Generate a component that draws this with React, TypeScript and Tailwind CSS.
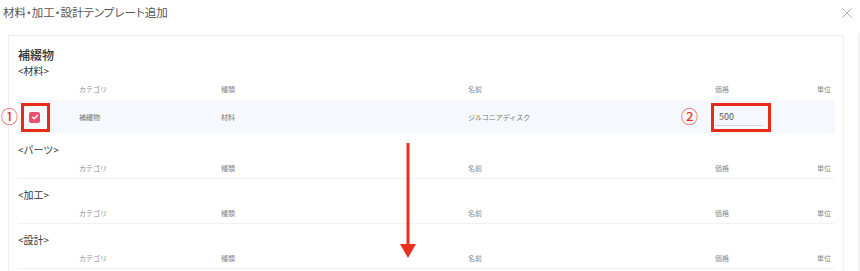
import { X } from 'lucide-react';

const cols = 'grid grid-cols-[61px_142px_247px_247px_90px_1fr] items-center';
const font = { fontFamily: '"Noto Sans CJK JP", "Noto Sans", sans-serif' };

function HeaderRow({ divider = true }: { divider?: boolean }) {
    return (
        <div className={`${cols} h-[21px] text-[7px] text-[#8a8a8a] ${divider ? 'border-b border-[#f0f1f3]' : ''}`}>
            <div />
            <div>カテゴリ</div>
            <div>種類</div>
            <div>名前</div>
            <div>価格</div>
            <div className="text-right pr-[4px]">単位</div>
        </div>
    );
}

function Section({ title }: { title: string }) {
    return (
        <div className="pt-[8px]">
            <div className="h-[16px] leading-[16px] text-[10px] text-[#333]">{title}</div>
            <HeaderRow />
        </div>
    );
}

export default function App() {
    return (
        <div className="relative w-[860px] h-[271px] overflow-hidden bg-white" style={font}>
            {/* Modal header */}
            <div className="flex items-start justify-between h-[35px] pl-[3px] pr-[4px] pt-[4px]">
                <h1 className="text-[11.5px] leading-[16px] text-[#555] [font-feature-settings:'palt']">材料・加工・設計テンプレート追加</h1>
                <X size={18} strokeWidth={1} className="text-[#9a9a9a] mt-[0px]" />
            </div>

            <div className="flex pl-[8px]">
                {/* Card */}
                <div className="w-[836px] border border-b-0 border-[#efefef] pl-[9px] pr-[8px] pt-[11px]">
                    <h2 className="h-[16px] leading-[16px] text-[12px] font-medium text-[#333]">補綴物</h2>

                    {/* 材料 */}
                    <div>
                        <div className="h-[16px] leading-[16px] text-[10px] text-[#333]">&lt;材料&gt;</div>
                        <HeaderRow divider={false} />
                        <div className={`${cols} relative h-[34px] bg-[#f5f8fc] text-[7px] text-[#777]`}>
                            <div className="pl-[11px] flex items-center">
                                <span className="w-[11px] h-[11px] rounded-[2px] bg-[#e8506d] flex items-center justify-center">
                                    <svg width="8" height="8" viewBox="0 0 8 8" fill="none">
                                        <path d="M1.5 4.2 L3.3 5.8 L6.6 2.3" stroke="white" strokeWidth="1.3" strokeLinecap="round" strokeLinejoin="round" />
                                    </svg>
                                </span>
                            </div>
                            <div>補綴物</div>
                            <div>材料</div>
                            <div>ジルコニアディスク</div>
                            <div>
                                <div className="w-[48px] h-[18px] border-b border-[#d4d7dc] pl-[4px] text-[9px] leading-[18px] text-[#555]">500</div>
                            </div>
                            <div />

                            {/* Annotations */}
                            <div className="absolute left-[3px] top-[3px] w-[29px] h-[29px] border-[3px] border-[#ea2a19]" />
                            <div className="absolute left-[-17px] top-[7px] text-[17px] leading-[18px] text-[#ea2a19]">①</div>
                            <div className="absolute left-[693px] top-[3px] w-[60px] h-[29px] border-[3px] border-[#ea2a19]" />
                            <div className="absolute left-[663px] top-[7px] text-[17px] leading-[18px] text-[#ea2a19]">②</div>
                        </div>
                    </div>

                    <Section title="<パーツ>" />
                    <Section title="<加工>" />
                    <Section title="<設計>" />
                </div>
                <div className="ml-[14px] mt-[-2px] w-[2px] h-[240px] bg-[#f2f2f2]" />
            </div>

            {/* Scroll arrow */}
            <svg className="absolute left-[400px] top-[143px]" width="16" height="116" viewBox="0 0 16 116">
                <rect x="6.5" y="0" width="3" height="104" fill="#e8321e" />
                <path d="M0 101 L16 101 L8 115 Z" fill="#e8321e" />
            </svg>
        </div>
    );
}
